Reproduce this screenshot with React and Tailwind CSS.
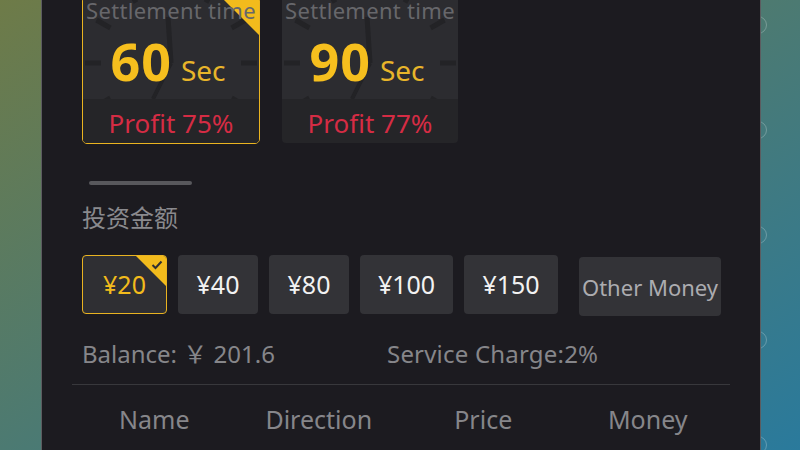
import React from "react";

function ClockMark() {
  const cx = 88;
  const cy = 66;
  const ticks = [];
  for (let i = 0; i < 12; i++) {
    const a = (i * 30 * Math.PI) / 180;
    const r1 = 70;
    const r2 = 86;
    ticks.push(
      <line
        key={i}
        x1={cx + r1 * Math.sin(a)}
        y1={cy - r1 * Math.cos(a)}
        x2={cx + r2 * Math.sin(a)}
        y2={cy - r2 * Math.cos(a)}
        stroke="#232326"
        strokeWidth="5"
      />
    );
  }
  return (
    <svg className="absolute inset-0" width="176" height="102" viewBox="0 0 176 102">
      {ticks}
      <line x1={cx} y1={cy} x2={cx - 3} y2={20} stroke="#232326" strokeWidth="5" />
      <line x1={cx} y1={cy} x2={cx - 18} y2={102} stroke="#232326" strokeWidth="4" />
    </svg>
  );
}

function TimeCard({ value, profit, active }) {
  return (
    <div
      className={
        "relative w-[178px] h-[148px] rounded-[5px] border-[1.5px] overflow-hidden flex flex-col " +
        (active ? "border-[#eab420]" : "border-transparent")
      }
    >
      <div className="relative h-[102px] bg-[#2c2c30] flex flex-col items-center">
        <ClockMark />
        {active && (
          <div className="absolute top-0 right-0 w-0 h-0 border-t-[38px] border-l-[38px] border-t-[#f2bb1c] border-l-transparent" />
        )}
        <div className="relative pt-[2px] text-[22px] leading-none text-[#67676b] whitespace-nowrap tracking-[0.3px]">
          Settlement time
        </div>
        <div className="relative mt-[14px] mr-[6px] flex items-baseline">
          <span className="text-[52px] leading-none font-bold text-[#f6bf1e] tracking-[1px]">{value}</span>
          <span className="ml-[9px] text-[28px] leading-none text-[#e8b52a]">Sec</span>
        </div>
      </div>
      <div className="flex-1 bg-[#252528] flex items-center justify-center pt-[3px] text-[26px] leading-none text-[#d52c44]">
        {profit}
      </div>
    </div>
  );
}

function AmountButton({ label, width, active }) {
  return (
    <div
      className={
        "relative h-[59px] rounded-[4px] flex items-center justify-center text-[25px] leading-none overflow-hidden border " +
        width +
        (active
          ? " bg-[#2f2f33] border-[#e9b321] text-[#f2bb1c]"
          : " bg-[#333337] border-transparent text-[#f2f2f2]")
      }
    >
      {active && (
        <>
          <div className="absolute top-0 right-0 w-0 h-0 border-t-[30px] border-l-[30px] border-t-[#f2bb1c] border-l-transparent" />
          <svg className="absolute top-[4px] right-[3px]" width="12" height="10" viewBox="0 0 12 10">
            <path d="M1.5 5 L4.5 8 L10.5 1.5" fill="none" stroke="#2f2f33" strokeWidth="2" />
          </svg>
        </>
      )}
      <span className="relative">{label}</span>
    </div>
  );
}

export default function App() {
  const circles = [25, 130, 235, 340, 445];
  return (
    <div className="w-[800px] h-[450px] overflow-hidden flex bg-[linear-gradient(to_bottom_right,#6e7b48,#4c7a72,#2a7a9c)] font-['Noto_Sans','Noto_Sans_CJK_SC',sans-serif]">
      <div className="w-[41px] shrink-0" />
      <div className="relative z-10 w-[720px] shrink-0 h-full bg-[#1c1b20] border-x border-[#5c5c60] pl-[40px] pr-[29px] flex flex-col">
        <div className="-mt-[4px] flex gap-[21px]">
          <TimeCard value="60" profit="Profit 75%" active />
          <TimeCard value="90" profit="Profit 77%" />
        </div>
        <div className="mt-[37px] ml-[7px] w-[103px] h-[4px] rounded-full bg-[#58585c]" />
        <div className="mt-[21px] text-[24px] leading-none text-[#8a8a8e]">投资金额</div>
        <div className="mt-[25px] flex items-start">
          <div className="flex gap-[11px]">
            <AmountButton label="¥20" width="w-[85px]" active />
            <AmountButton label="¥40" width="w-[80px]" />
            <AmountButton label="¥80" width="w-[80px]" />
            <AmountButton label="¥100" width="w-[93px]" />
            <AmountButton label="¥150" width="w-[94px]" />
          </div>
          <div className="ml-[21px] mt-[2px] w-[142px] h-[59px] rounded-[4px] bg-[#333337] flex items-center justify-center text-[22px] leading-none text-[#acacb0] whitespace-nowrap">
            Other Money
          </div>
        </div>
        <div className="mt-[26px] flex text-[24px] leading-none text-[#86868a] whitespace-nowrap">
          <div className="w-[305px]">Balance:&nbsp;￥&nbsp;201.6</div>
          <div className="tracking-[0.2px]">Service Charge:2%</div>
        </div>
        <div className="mt-[18px] -ml-[10px] w-[658px] h-px bg-[#38383c]" />
        <div className="mt-[22px] -ml-[10px] w-[658px] grid grid-cols-4 text-[25px] leading-none text-[#86868a]">
          <div className="text-center">Name</div>
          <div className="text-center">Direction</div>
          <div className="text-center">Price</div>
          <div className="text-center">Money</div>
        </div>
      </div>
      <div className="relative flex-1">
        {circles.map((y) => (
          <div
            key={y}
            className="absolute left-[-12px] w-[18px] h-[18px] rounded-full border border-white/25"
            style={{ top: y - 9 }}
          />
        ))}
      </div>
    </div>
  );
}
